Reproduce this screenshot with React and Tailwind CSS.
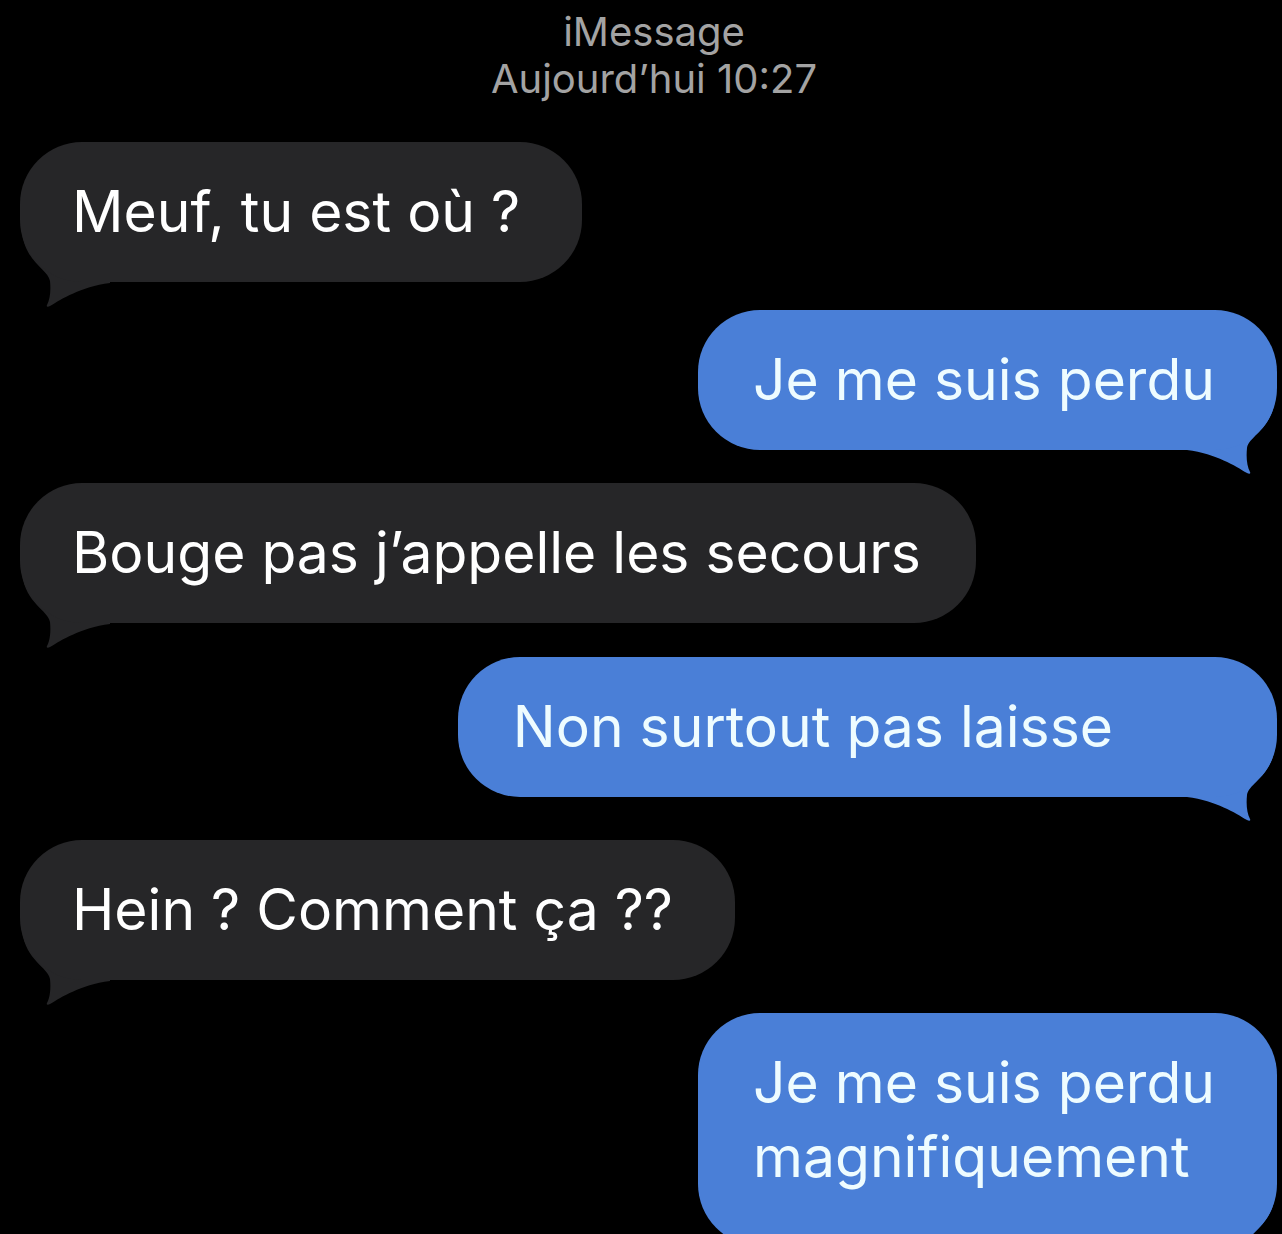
import React from 'react'

const font = { fontFamily: 'Inter, Roboto, "Noto Sans", sans-serif' }

function Tail({ side, color }) {
  const left = side === 'left'
  return (
    <svg
      width="100"
      height="80"
      viewBox="0 0 100 80"
      className={left ? 'absolute left-0 bottom-[-31px]' : 'absolute right-0 bottom-[-30px] -scale-x-100'}
    >
      <path
        d="M2 0 C6 30 28 36 30 48 C31 58 30 66 27 72 C26 74 28 74 30 73 C42 66 60 54 90 50 L90 0 Z"
        fill={color}
      />
    </svg>
  )
}

function Received({ children, className = 'pr-[62px]' }) {
  return (
    <div className="relative self-start ml-[20px]">
      <div className={'relative z-10 rounded-[62px] bg-[#262628] pl-[52px] py-[33px] text-white text-[57px] leading-[74px] ' + className}>
        {children}
      </div>
      <Tail side="left" color="#262628" />
    </div>
  )
}

function Sent({ children, className = 'pr-[62px] py-[33px]' }) {
  return (
    <div className="relative self-end mr-[5px]">
      <div className={'relative z-10 rounded-[62px] bg-[#4a7fd7] pl-[55px] text-[#eefcff] text-[57px] leading-[74px] ' + className}>
        {children}
      </div>
      <Tail side="right" color="#4a7fd7" />
    </div>
  )
}

export default function App() {
  return (
    <div className="w-[1282px] h-[1234px] overflow-hidden bg-black" style={font}>
      <div className="flex flex-col items-center pt-[8px] pl-[26px] text-[#a3a3a3] text-[40px] leading-[47px]">
        <div>iMessage</div>
        <div>Aujourd’hui 10:27</div>
      </div>
      <div className="flex flex-col mt-[40px]">
        <Received>Meuf, tu est où ?</Received>
        <div className="h-[28px]" />
        <Sent>Je me suis perdu</Sent>
        <div className="h-[33px]" />
        <Received className="pr-[55px]">Bouge pas j’appelle les secours</Received>
        <div className="h-[34px]" />
        <Sent className="pr-[164px] py-[33px]">Non surtout pas laisse</Sent>
        <div className="h-[43px]" />
        <Received>Hein ? Comment ça ??</Received>
        <div className="h-[33px]" />
        <Sent className="pr-[62px] pt-[33px] pb-[52px]">
          Je me suis perdu
          <br />
          magnifiquement
        </Sent>
      </div>
    </div>
  )
}
